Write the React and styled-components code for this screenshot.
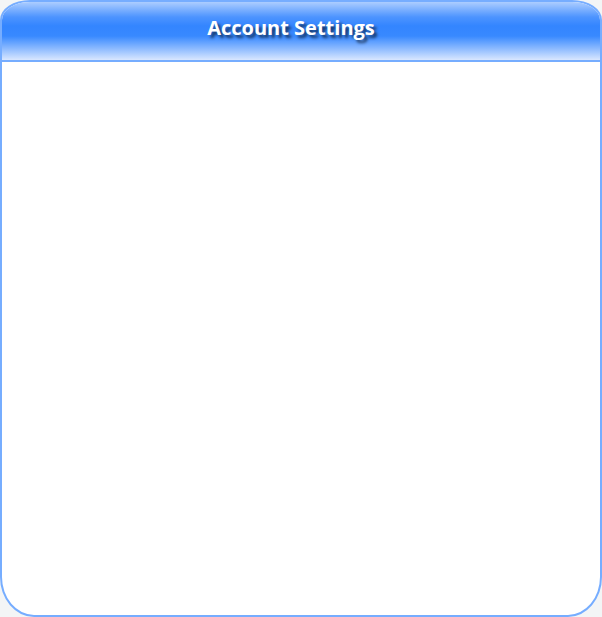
import React from "react";
import styled, { createGlobalStyle } from "styled-components";

const GlobalStyle = createGlobalStyle`
  body { margin: 0; background: #f3f5f6; }
  * { box-sizing: border-box; }
`;

const Panel = styled.main`
  display: flex;
  flex-direction: column;
  min-height: 100vh;
  border: 2px solid #76adff;
  border-radius: 30px 30px 34px 34px / 20px 20px 40px 40px;
  overflow: hidden;
  background: #fff;
`;

const Header = styled.header`
  display: flex;
  justify-content: center;
  height: 60px;
  padding: 11px 20px 0 0;
  border-bottom: 2px solid #76adff;
  background: linear-gradient(#accdff 0, #4d94ff 15px, #3385ff 24px, #3889ff 34px, #d9e7ff 58px);
`;

const Title = styled.h1`
  margin: 0;
  color: #fff;
  font: 700 20px/30px "Trebuchet MS", "Open Sans", sans-serif;
  text-shadow: 3px 3px 3px rgba(0, 0, 0, 0.6);
`;

export default function App() {
  return (
    <>
      <GlobalStyle />
      <Panel>
        <Header>
          <Title>Account Settings</Title>
        </Header>
      </Panel>
    </>
  );
}
